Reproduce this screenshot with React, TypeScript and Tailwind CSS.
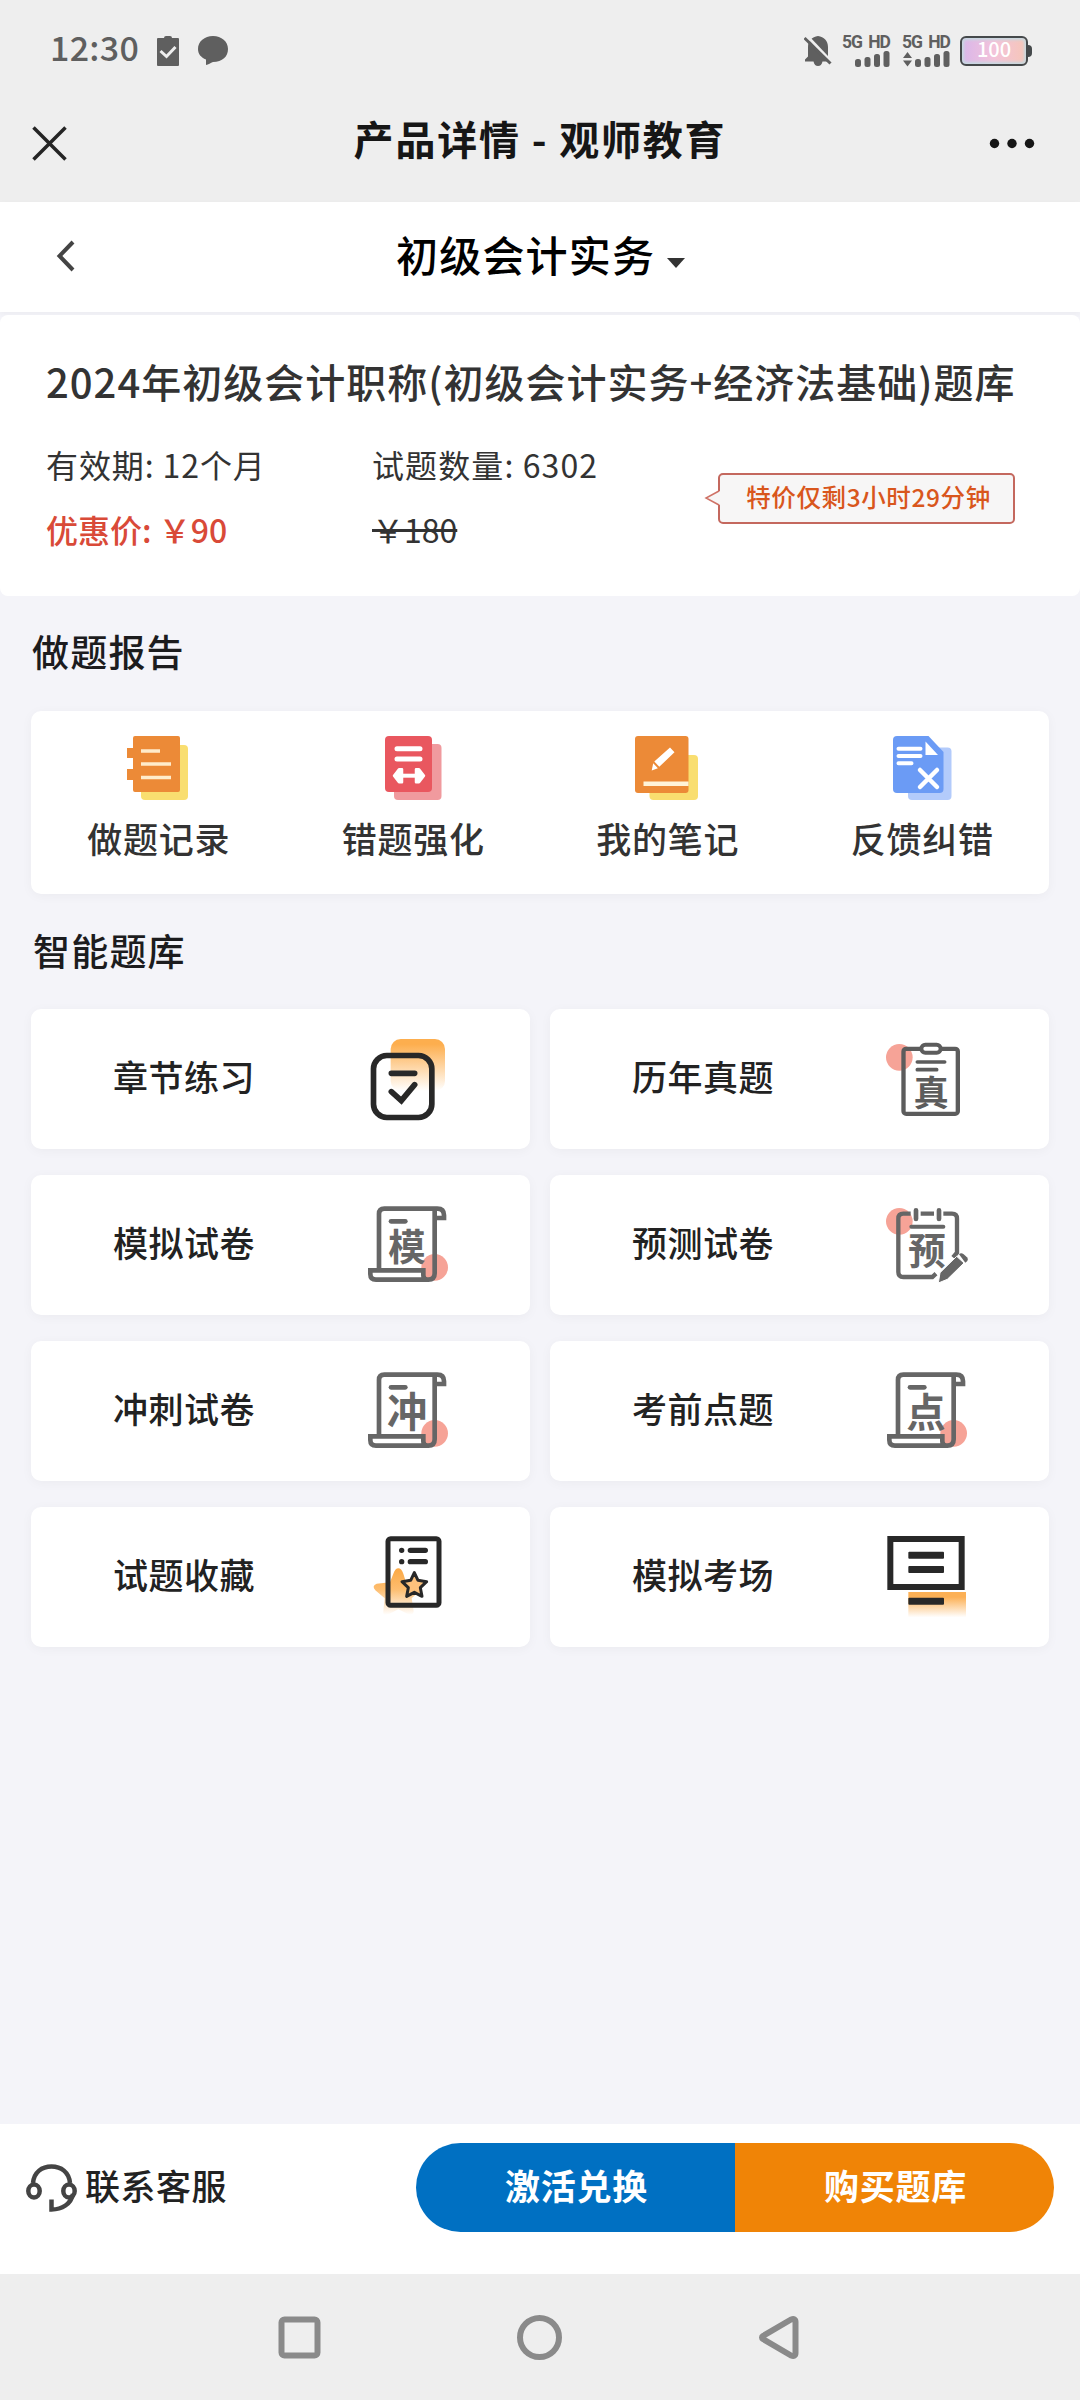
import React from 'react';
import clsx from 'clsx';

const SANS = "font-['Noto_Sans_CJK_SC','Noto_Sans',sans-serif]";

interface EntryItem {
  label: string;
  icon: React.ReactNode;
}

/* ---------- Status bar icons ---------- */

function SignalBars({ withArrows = false }: { withArrows?: boolean }) {
  return (
    <svg className="h-4 w-12" viewBox="0 0 48 16" fill="#5f5f5f">
      {withArrows && <path d="M1 7 5.5 1 10 7ZM1 9.5h9L5.5 15.5Z" />}
      <rect x="13" y="8" width="6" height="8" rx="2.5" />
      <rect x="22.5" y="6" width="6" height="10" rx="2.5" />
      <rect x="32" y="3" width="6" height="13" rx="2.5" />
      <rect x="41.5" y="0" width="6" height="16" rx="2.5" />
    </svg>
  );
}

function NetworkLabel() {
  return (
    <span className="flex justify-between whitespace-nowrap font-[Roboto] text-[17.5px] font-bold leading-[17px] tracking-[-1px]">
      <span>5G</span>
      <span>HD</span>
    </span>
  );
}

function StatusBar() {
  return (
    <div className="flex h-[90px] items-start bg-[#eeeeee] pl-[50px] pr-[48px] pt-[34px] text-[#5f5f5f]">
      <span className="w-[107px] text-[34px] font-medium leading-[26px] tracking-[0.3px]">12:30</span>
      <svg className="mt-[2px] h-[30px] w-[22px]" viewBox="0 0 22 30">
        <path d="M1 2h6q0-2 2-2h4q2 0 2 2h6q1 0 1 1v26q0 1-1 1H1q-1 0-1-1V3q0-1 1-1Z" fill="#5f5f5f" />
        <path d="m3.5 15 6 5.5 9-9.5" fill="none" stroke="#eee" strokeWidth="3" />
      </svg>
      <svg className="ml-[19px] mt-[2px] h-[30px] w-[30px]" viewBox="0 0 30 30">
        <path d="M15 0c8.500 0 15 5.500 15 13s-5.500 13-15 13c-2.500 1-4.500 2.500-7 3V23.500C3 21.500 0 18 0 13 0 5.500 6.500 0 15 0Z" fill="#5f5f5f" />
      </svg>

      <div className="ml-auto flex items-start">
        <svg className="mt-[2px] h-[30px] w-[28px]" viewBox="0 0 28 30">
          <path d="M14 0c6 1 10 4.500 10 11v10l3 4.500H18.500q-1 4.500-4.500 4.500t-4.500-4.500H1v-2l3-3V11c0-6.500 4-10 10-11Z" fill="#5f5f5f" />
          <path d="m2-1 27 28.500" stroke="#eee" strokeWidth="3" />
          <path d="m.5 2 26 25.500" stroke="#5f5f5f" strokeWidth="3" />
        </svg>
        <div className="ml-[10px] flex w-12 flex-col">
          <NetworkLabel />
          <SignalBars />
        </div>
        <div className="ml-[12px] flex w-12 flex-col">
          <NetworkLabel />
          <SignalBars withArrows />
        </div>
        <div className="ml-[10px] mt-[2px] flex items-center">
          <div className="flex h-[30px] w-[68px] items-center justify-center rounded-[6px] border-2 border-[#45494b] bg-gradient-to-r from-[#d9b6ea] via-[#f3c3da] to-[#f6c6b8] text-[20px] font-medium leading-[20px] text-white shadow-[inset_0_0_3px_2px_#c6d9e0]">
            <span className="pb-[5px]">100</span>
          </div>
          <div className="h-[12px] w-1 rounded-r-[4px] bg-[#45494b]" />
        </div>
      </div>
    </div>
  );
}

/* ---------- Headers ---------- */

function WebViewHeader() {
  return (
    <div className="grid h-[112px] grid-cols-[1fr_auto_1fr] items-start bg-[#eeeeee] px-[32px]">
      <svg className="mt-[36px] h-[36px] w-[36px]" viewBox="0 0 36 36" stroke="#242424" strokeWidth="3.5" fill="none">
        <path d="m1.500 1.500 32 32M33.500 1.500l-32 32" />
      </svg>
      <h1 className="mt-[23px] text-[40px] font-bold leading-[50px] tracking-[1.8px] text-[#161616]">
        产品详情 - 观师教育
      </h1>
      <svg className="ml-auto mt-[48px] h-[11px] w-[60px]" viewBox="0 0 60 11" fill="#161616">
        <circle cx="6.5" cy="5.5" r="4.7" />
        <circle cx="24" cy="5.5" r="4.7" />
        <circle cx="41.5" cy="5.5" r="4.7" />
      </svg>
    </div>
  );
}

function SubjectHeader() {
  return (
    <div className="flex h-[110px] items-center bg-white pl-[56px] shadow-[0_2px_6px_rgba(0,0,0,0.04)]">
      <svg className="mb-[2px] h-[32px] w-[20px]" viewBox="0 0 20 32" fill="none" stroke="#444" strokeWidth="4">
        <path d="M17 2 3.500 16 17 30" />
      </svg>
      <div className="ml-[320px] flex items-center pb-[6px]">
        <span className="text-[42px] font-medium leading-[52px] tracking-[1.2px] text-black">初级会计实务</span>
        <svg className="ml-[12px] mt-[18px] h-[10px] w-[18px]" viewBox="0 0 18 10">
          <path d="M0 0h18L9 10Z" fill="#333" />
        </svg>
      </div>
    </div>
  );
}

/* ---------- Product summary ---------- */

function ProductCard() {
  return (
    <section className="h-[281px] rounded-[8px] bg-white px-[46px] pt-[38px] text-[#333]">
      <h2 className="whitespace-nowrap text-[40px] font-medium leading-[56px] tracking-[1px]">
        2024年初级会计职称(初级会计实务+经济法基础)题库
      </h2>
      <div className="mt-[33px] flex justify-between">
        <div className="grid grid-cols-[326px_auto] gap-y-[21px] text-[32px] leading-[44px]">
          <span className="tracking-[0.9px]">有效期: 12个月</span>
          <span className="tracking-[1.1px]">试题数量: 6302</span>
          <span className="font-medium text-[#d94a38]">优惠价: ￥90</span>
          <span className="line-through decoration-[3px]">￥180</span>
        </div>
        <div className="mr-[19px] mt-[31px] flex h-[50px] items-center">
          <svg className="z-10 -mr-[2px] h-[18px] w-[16px]" viewBox="0 0 16 18">
            <path d="M16 2 2 9l14 7Z" fill="#f7f6f6" />
            <path d="M15 2 2 9l13 7" fill="none" stroke="#cf7266" strokeWidth="1.5" />
          </svg>
          <div className="flex h-[51px] w-[297px] items-center justify-center rounded-[5px] border-2 border-[#c4685e] bg-[#f7f6f6] pb-[2px] pl-[4px] text-[24.5px] font-medium tracking-[0.6px] text-[#d9561c]">
            特价仅剩3小时29分钟
          </div>
        </div>
      </div>
    </section>
  );
}

/* ---------- Report icons ---------- */

function RecordIcon() {
  return (
    <svg className="size-16" viewBox="0 0 64 64">
      <rect x="15" y="9" width="47" height="55" rx="4" fill="#f9de70" />
      <path d="M9 0h43q2 0 2 2v52q0 2-2 2H9q-2 0-2-2V44H1V33h6V22H1V12h6V2q0-2 2-2Z" fill="#ec8a37" />
      <path d="M15 15h19M15 28h30M15 41.500h30" stroke="#ffeccb" strokeWidth="3.5" />
    </svg>
  );
}

function MistakeIcon() {
  return (
    <svg className="size-16" viewBox="0 0 64 64">
      <rect x="13" y="8" width="47.5" height="56" rx="4" fill="#f09a9e" />
      <rect x="4" y="0" width="47" height="56" rx="4" fill="#e9575f" />
      <path d="M16 12.700h23M16 23h23" stroke="#fff" strokeWidth="5" strokeLinecap="round" />
      <path d="M18 39.700h20" stroke="#fff" strokeWidth="4" />
      <path d="m13 39.700 5-6.500h3v13h-3ZM43 39.700l-5-6.500h-3v13h3Z" fill="#fff" stroke="#fff" strokeWidth="2.5" strokeLinejoin="round" />
    </svg>
  );
}

function NoteIcon() {
  return (
    <svg className="size-16" viewBox="0 0 64 64">
      <rect x="14.5" y="19" width="48.5" height="45" rx="4" fill="#f9de70" />
      <rect x="0" y="0" width="53.5" height="57" rx="3" fill="#ec8a37" />
      <path d="M8.500 47.700h45" stroke="#fff3d8" strokeWidth="4.5" />
      <path d="m35 11.500 4.500 4.800-15.200 14.500-5-5.300ZM18.200 27.200l4.700 5-6.200 2.300Z" fill="#fff" />
    </svg>
  );
}

function FeedbackIcon() {
  return (
    <svg className="size-16" viewBox="0 0 64 64">
      <rect x="18" y="11.5" width="43.5" height="52.5" rx="4" fill="#b3cbfb" />
      <path d="M7 0h31.500L53.500 16v37q0 4-4 4H7q-4 0-4-4V4q0-4 4-4Z" fill="#6b9bf5" />
      <path d="M35.500 5.500V19H48Z" fill="#fff" />
      <path d="M8.500 12.700h22M8.500 20h22M8.500 27.300h13" stroke="#fff" strokeWidth="4" strokeLinecap="round" />
      <path d="m30 34 17 17M47 34 30 51" stroke="#fff" strokeWidth="4.5" strokeLinecap="round" />
    </svg>
  );
}

/* ---------- Question bank icons ---------- */

function ChapterIcon() {
  return (
    <svg className="size-20 overflow-visible" viewBox="0 0 240 240">
      <defs>
        <linearGradient id="chapter-fade" x1="0" y1="0" x2="0" y2="1">
          <stop offset="0.1" stopColor="#fdae4e" />
          <stop offset="1" stopColor="#fdae4e" stopOpacity="0" />
        </linearGradient>
      </defs>
      <rect x="68" y="0" width="163" height="156" rx="30" fill="url(#chapter-fade)" />
      <g fill="none" stroke="#282828" strokeWidth="17" strokeLinecap="round">
        <rect x="16.5" y="49.5" width="175" height="186" rx="40" />
        <path d="M70 103h70M70 158l30 27 40-48" />
      </g>
    </svg>
  );
}

function PastPaperIcon() {
  return (
    <svg className="size-20 overflow-visible" viewBox="0 0 240 240">
      <circle cx="37" cy="55" r="40" fill="#f6a397" />
      <g fill="none" stroke="#5c5c5c" strokeWidth="13" strokeLinecap="round">
        <rect x="49.5" y="29.5" width="163" height="195" rx="8" />
        <rect x="103" y="17" width="58" height="24" rx="12" fill="#fff" strokeWidth="12" />
        <path d="M91 69h82M91 92h58" strokeWidth="11" />
      </g>
      <text x="132.5" y="200" textAnchor="middle" fontSize="106" fontWeight="700" fill="#5c5c5c">真</text>
    </svg>
  );
}

function ScrollIcon({ char, size }: { char: string; size: number }) {
  return (
    <svg className="size-20 overflow-visible" viewBox="0 0 240 240">
      <circle cx="200" cy="187" r="40" fill="#f6a397" />
      <g fill="none" stroke="#666" strokeWidth="14">
        <path d="M33 196V27Q33 11 49 11H208Q228 11 228 31V39H200" />
        <path d="M200 13V205Q200 224 181 224H24Q7 224 7 207V196H166V211Q166 224 178 224" />
        <path d="M69 49h43" strokeLinecap="round" />
      </g>
      <text x="117" y="167" textAnchor="middle" fontSize={size} fontWeight="700" fill="#666">{char}</text>
    </svg>
  );
}

function ForecastIcon() {
  return (
    <svg className="size-20 overflow-visible" viewBox="0 0 240 240">
      <circle cx="37" cy="49" r="40" fill="#f6a397" />
      <g fill="none" stroke="#666" strokeWidth="13">
        <path d="M71 26H49Q34 26 34 41V201Q34 216 49 216H136L147 206M101 26H141M169 26H195Q210 26 210 41V143L198 157" />
        <path d="M87 16v26M156 16v26" strokeWidth="14" strokeLinecap="round" />
        <path d="M73 65h96" strokeWidth="12" strokeLinecap="round" />
      </g>
      <text x="120" y="180" textAnchor="middle" fontSize="112" fontWeight="700" fill="#666">预</text>
      <path d="M154 234 159 203 209 154 231 174 181 223Z" fill="#666" stroke="#fff" strokeWidth="3" />
      <path d="M216 148q6-6 14 0l10 9q5 5 1 11l-6 5Z" fill="#666" />
    </svg>
  );
}

function FavoriteIcon() {
  return (
    <svg className="size-20 overflow-visible" viewBox="0 0 240 240">
      <defs>
        <linearGradient id="star-fade" x1="0" y1="0" x2="0" y2="1">
          <stop offset="0" stopColor="#fba945" />
          <stop offset="0.45" stopColor="#fdbd6f" />
          <stop offset="1" stopColor="#fff" />
        </linearGradient>
      </defs>
      <path
        d="M91 94Q100 94 106 110L114 136 150 141Q166 148 152 164L131 184 137 222Q136 238 118 230L91 217 62 232Q44 238 46 222L50 184 22 160Q10 146 26 140L66 136 76 110Q82 94 91 94Z"
        fill="url(#star-fade)"
      />
      <rect x="60" y="5" width="153" height="200" rx="8" fill="none" stroke="#282828" strokeWidth="15" />
      <g stroke="#282828" strokeWidth="16" strokeLinecap="round">
        <path d="M101 40h.1M101 74h.1M127 40h45M127 74h45" />
      </g>
      <path
        d="M139 107 150 130 176 134 157 152 162 178 139 166 116 178 121 152 102 134 128 130Z"
        fill="#fdc27d"
        stroke="#282828"
        strokeWidth="9"
        strokeLinejoin="round"
      />
    </svg>
  );
}

function ExamRoomIcon() {
  return (
    <svg className="size-20 overflow-visible" viewBox="0 0 240 240">
      <defs>
        <linearGradient id="desk-fade" x1="0" y1="0" x2="0" y2="1">
          <stop offset="0.2" stopColor="#fcb055" />
          <stop offset="1" stopColor="#fcb055" stopOpacity="0" />
        </linearGradient>
      </defs>
      <rect x="64" y="165" width="173" height="76" fill="url(#desk-fade)" />
      <rect x="10" y="6" width="214" height="144" fill="none" stroke="#282828" strokeWidth="18" />
      <g fill="#282828">
        <rect x="64" y="44" width="107" height="21" rx="3" />
        <rect x="64" y="87" width="107" height="21" rx="3" />
        <rect x="64" y="182" width="107" height="21" rx="3" />
      </g>
    </svg>
  );
}

/* ---------- Lists ---------- */

const reports: EntryItem[] = [
  { label: '做题记录', icon: <RecordIcon /> },
  { label: '错题强化', icon: <MistakeIcon /> },
  { label: '我的笔记', icon: <NoteIcon /> },
  { label: '反馈纠错', icon: <FeedbackIcon /> },
];

const banks: EntryItem[] = [
  { label: '章节练习', icon: <ChapterIcon /> },
  { label: '历年真题', icon: <PastPaperIcon /> },
  { label: '模拟试卷', icon: <ScrollIcon char="模" size={112} /> },
  { label: '预测试卷', icon: <ForecastIcon /> },
  { label: '冲刺试卷', icon: <ScrollIcon char="冲" size={122} /> },
  { label: '考前点题', icon: <ScrollIcon char="点" size={118} /> },
  { label: '试题收藏', icon: <FavoriteIcon /> },
  { label: '模拟考场', icon: <ExamRoomIcon /> },
];

function SectionTitle({ children, className }: { children: React.ReactNode; className?: string }) {
  return (
    <h3 className={clsx('text-[37px] font-medium leading-[48px] tracking-[1.2px] text-[#1c1c1e]', className)}>
      {children}
    </h3>
  );
}

/* ---------- Bottom ---------- */

function ActionBar() {
  return (
    <div className="flex h-[150px] items-start bg-white pl-[26px] pr-[26px] pt-[19px]">
      <div className="flex h-[89px] items-center">
        <svg className="h-[50px] w-[51px]" viewBox="0 0 51 50" fill="none" stroke="#444" strokeWidth="4.5">
          <path d="M7 20C8 9 16 3.500 25.500 3.500S43 9 44 20" />
          <ellipse cx="8" cy="28" rx="5.700" ry="6.500" />
          <ellipse cx="43" cy="28" rx="5.700" ry="6.500" />
          <path d="M47 31C45 41 36 46.500 25.500 46.500V36.500" />
        </svg>
        <span className="ml-[8px] pb-[5px] text-[35px] font-medium leading-[48px] tracking-[0.5px] text-[#222]">联系客服</span>
      </div>
      <div className="ml-auto flex h-[89px] overflow-hidden rounded-full text-[35px] font-bold tracking-[0.8px] text-white">
        <button type="button" className="w-[319px] bg-[#0070c2] pb-[5px] pl-[2px]">激活兑换</button>
        <button type="button" className="w-[319px] bg-[#f08406] pb-[5px] pl-[2px]">购买题库</button>
      </div>
    </div>
  );
}

function SystemNav() {
  return (
    <div className="flex h-[126px] items-center justify-center gap-[195px] bg-[#eeeeee] pr-[1px]">
      <svg className="size-[45px]" viewBox="0 0 45 45" fill="none" stroke="#8a8a8a" strokeWidth="6">
        <rect x="4.5" y="4.5" width="36" height="36" rx="3" />
      </svg>
      <svg className="size-[45px]" viewBox="0 0 45 45" fill="none" stroke="#8a8a8a" strokeWidth="6">
        <circle cx="22.5" cy="22.5" r="19.5" />
      </svg>
      <svg className="size-[45px]" viewBox="0 0 45 45" fill="none" stroke="#8a8a8a" strokeWidth="6" strokeLinejoin="round">
        <path d="M6 21Q4 22.500 6 24L34 40.500Q38.500 42 38.500 38V7Q38.500 3 34 4.500Z" />
      </svg>
    </div>
  );
}

export default function App() {
  return (
    <div className={clsx('flex h-[2400px] w-[1080px] flex-col overflow-hidden bg-[#f4f4f9]', SANS)}>
      <StatusBar />
      <WebViewHeader />
      <SubjectHeader />

      <main className="flex flex-1 flex-col pt-[3px]">
        <ProductCard />

        {/* Reports */}
        <SectionTitle className="ml-[32px] mt-[31px]">做题报告</SectionTitle>
        <section className="mx-[31px] mt-[36px] grid h-[183px] grid-cols-4 rounded-[10px] bg-white pt-[25px] shadow-[0_2px_12px_rgba(0,0,0,0.04)]">
          {reports.map((item) => (
            <div key={item.label} className="flex flex-col items-center">
              {item.icon}
              <span className="mt-[14px] pl-[1px] text-[35px] font-medium leading-[48px] tracking-[0.7px] text-[#333]">{item.label}</span>
            </div>
          ))}
        </section>

        {/* Question banks */}
        <SectionTitle className="ml-[33px] mt-[32px]">智能题库</SectionTitle>
        <section className="mx-[31px] mt-[35px] grid grid-cols-2 gap-x-[20px] gap-y-[26px]">
          {banks.map((item) => (
            <div
              key={item.label}
              className="flex h-[140px] items-center rounded-[10px] bg-white pl-[82px] shadow-[0_2px_12px_rgba(0,0,0,0.04)]"
            >
              <span className="w-[255px] pb-[6px] text-[35px] font-medium leading-[48px] tracking-[0.5px] text-[#222]">{item.label}</span>
              {item.icon}
            </div>
          ))}
        </section>
      </main>

      <ActionBar />
      <SystemNav />
    </div>
  );
}
